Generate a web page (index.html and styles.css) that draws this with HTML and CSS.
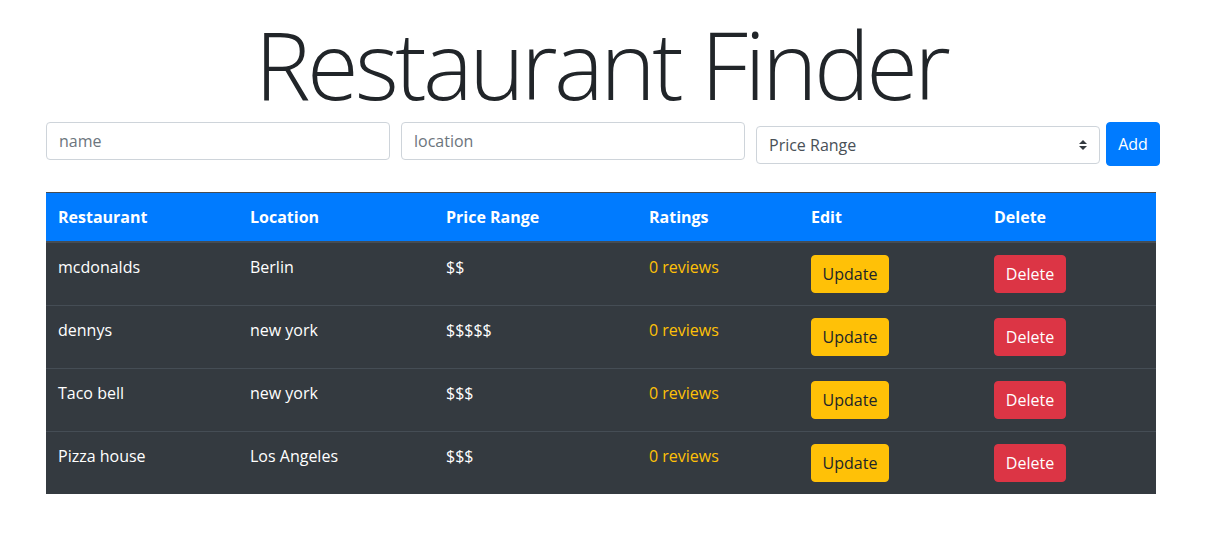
FILE: index.html
```html
<!DOCTYPE html>
<html lang="en">
<head>
<meta charset="utf-8">
<title>Restaurant Finder</title>
<link rel="stylesheet" href="styles.css">
</head>
<body>
<div class="container">
  <h1 class="title">Restaurant Finder</h1>
  <form class="add-form">
    <div class="col"><input class="field" type="text" placeholder="name"></div>
    <div class="col"><input class="field" type="text" placeholder="location"></div>
    <div class="col select-col">
      <div class="select-wrap">
        <select class="field select">
          <option>Price Range</option>
        </select>
        <svg class="select-arrows" width="8" height="10" viewBox="0 0 4 5"><path fill="#343a40" d="M2 0L0 2h4zm0 5L0 3h4z"/></svg>
      </div>
    </div>
    <button class="btn btn-primary add-btn" type="button">Add</button>
  </form>
  <table class="list">
    <colgroup>
      <col class="c1"><col class="c2"><col class="c3"><col class="c4"><col class="c5"><col class="c6">
    </colgroup>
    <thead>
      <tr>
        <th>Restaurant</th><th>Location</th><th>Price Range</th><th>Ratings</th><th>Edit</th><th>Delete</th>
      </tr>
    </thead>
    <tbody>
      <tr>
        <td>mcdonalds</td><td>Berlin</td><td>$$</td><td class="rating">0 reviews</td>
        <td><button class="btn btn-warning btn-update" type="button">Update</button></td>
        <td><button class="btn btn-danger btn-delete" type="button">Delete</button></td>
      </tr>
      <tr>
        <td>dennys</td><td>new york</td><td>$$$$$</td><td class="rating">0 reviews</td>
        <td><button class="btn btn-warning btn-update" type="button">Update</button></td>
        <td><button class="btn btn-danger btn-delete" type="button">Delete</button></td>
      </tr>
      <tr>
        <td>Taco bell</td><td>new york</td><td>$$$</td><td class="rating">0 reviews</td>
        <td><button class="btn btn-warning btn-update" type="button">Update</button></td>
        <td><button class="btn btn-danger btn-delete" type="button">Delete</button></td>
      </tr>
      <tr>
        <td>Pizza house</td><td>Los Angeles</td><td>$$$</td><td class="rating">0 reviews</td>
        <td><button class="btn btn-warning btn-update" type="button">Update</button></td>
        <td><button class="btn btn-danger btn-delete" type="button">Delete</button></td>
      </tr>
    </tbody>
  </table>
</div>
</body>
</html>
```
FILE: styles.css
```css
* { box-sizing: border-box; }
html, body { margin: 0; padding: 0; background: #fff; }
body {
  font-family: "Open Sans", "Noto Sans", "Liberation Sans", sans-serif;
  font-size: 16px;
  line-height: 1.5;
  color: #212529;
}
.container {
  width: 1110px;
  margin-left: 46px;
}
.title {
  margin: 0;
  padding-top: 7px;
  font-size: 94px;
  font-weight: 300;
  line-height: 115px;
  letter-spacing: -3.6px;
  text-align: center;
  color: #212529;
}
.add-form {
  display: flex;
  align-items: flex-start;
  margin: 0 0 26px;
  width: 1114px;
}
.col { width: 344px; flex: 0 0 344px; margin-right: 11px; }
.select-col { margin-right: 6px; padding-top: 4px; }
.field {
  display: block;
  width: 100%;
  height: 38px;
  padding: 6px 12px;
  font-family: inherit;
  font-size: 16px;
  line-height: 1.5;
  color: #495057;
  background: #fff;
  border: 1px solid #ced4da;
  border-radius: 4px;
  outline: none;
}
.field::placeholder { color: #6c757d; opacity: 1; }
.select-wrap { position: relative; }
.select { appearance: none; -webkit-appearance: none; padding-right: 28px; }
.select-arrows {
  position: absolute;
  right: 13px;
  top: 14px;
  pointer-events: none;
}
.btn {
  display: inline-block;
  font-family: inherit;
  font-size: 16px;
  line-height: 1.5;
  font-weight: 400;
  padding: 6px 12px;
  border: 1px solid transparent;
  border-radius: 4px;
  cursor: pointer;
  text-align: center;
}
.btn-primary { background: #007bff; border-color: #007bff; color: #fff; }
.btn-warning { background: #ffc107; border-color: #ffc107; color: #212529; }
.btn-danger { background: #dc3545; border-color: #dc3545; color: #fff; }
.add-btn { flex: 0 0 54px; width: 54px; height: 44px; padding: 6px 0; }
.btn-update { width: 78px; padding: 6px 0; }
.btn-delete { width: 72px; padding: 6px 0; }
.list {
  width: 1110px;
  border-collapse: collapse;
  table-layout: fixed;
  background: #343a40;
  color: #fff;
}
.c1 { width: 192px; }
.c2 { width: 196px; }
.c3 { width: 203px; }
.c4 { width: 162px; }
.c5 { width: 183px; }
.c6 { width: 174px; }
.list th, .list td {
  padding: 12px;
  text-align: left;
  vertical-align: top;
  border-top: 1px solid #454d55;
}
.list thead th {
  background: #007bff;
  font-weight: 700;
  vertical-align: bottom;
  border-bottom: 2px solid #454d55;
}
.list td.rating { color: #ffc107; }
```
